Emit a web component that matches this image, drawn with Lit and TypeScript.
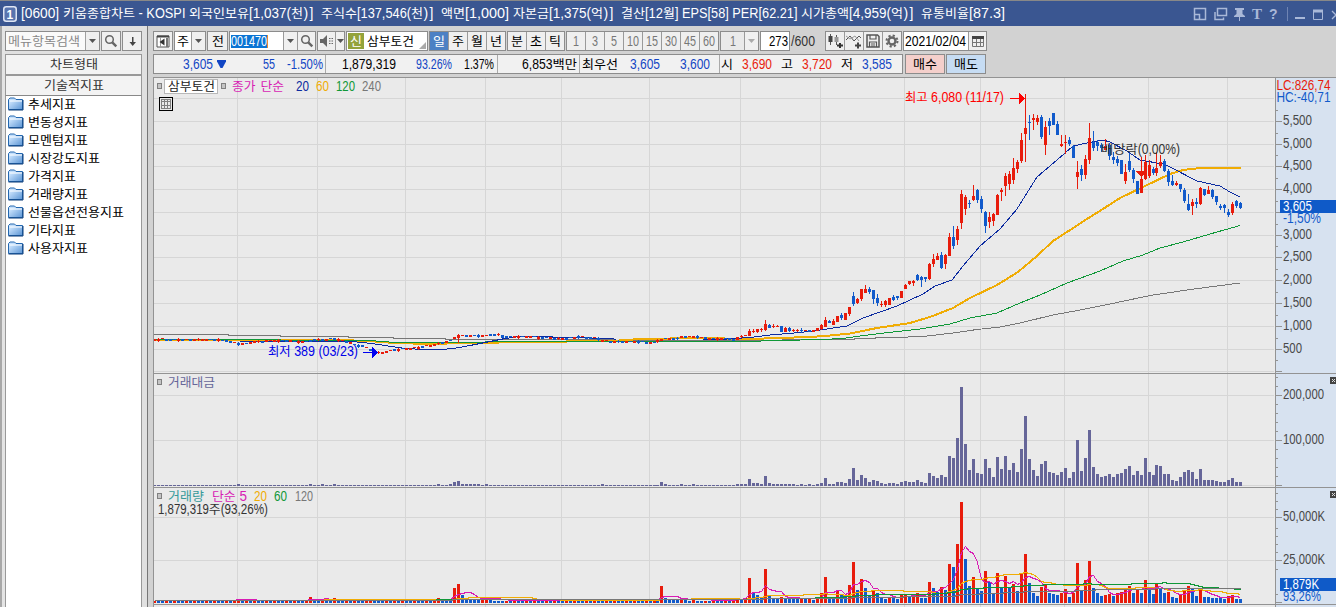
import { LitElement, html, svg, css } from "lit";
import { customElement } from "lit/decorators.js";

const RED = "#e81c0c";
const BLUE = "#115acb";

/* ---------- text set on a fixed 6/12 pixel pitch ---------- */
const isHangul = (c: string) => c >= "가" && c <= "힣";
const unit = (c: string, prop: boolean) => {
  if (isHangul(c)) return 12;
  if (!prop) return 6;
  if (c === "," || c === "." || c === ":") return 3.4;
  if (c === " ") return 5;
  if (c === "(" || c === ")") return 5;
  if (c === "%") return 9;
  if (c === "C" || c === "H" || c === "K") return 7.5;
  return 6.4;
};
const runs = (s: string) => s.match(/[가-힣]+|[^가-힣]+/g) ?? [];

function glyphs(s: string, x: number, y: number, fill: string, w = 0, prop = false) {
  const natural = [...s].reduce((a, c) => a + unit(c, prop), 0);
  const k = w ? w / natural : 1;
  let cx = x;
  return svg`<text class="g" y=${y} fill=${fill}>${runs(s).map((r) => {
    const steps = [...r].map((c) => unit(c, prop) * k);
    const rw = steps.reduce((a, b) => a + b, 0);
    const at = cx;
    cx += rw;
    if (!prop && !/[0-9A-Za-z가-힣]/.test(r)) {
      let p = at + 0.5;
      const xs = steps.map((d) => { const v = p; p += d; return v; }).join(" ");
      return svg`<tspan class="en" x=${xs}>${r}</tspan>`;
    }
    return svg`<tspan class=${isHangul(r[0]) ? "ko" : "en"} x=${at} textLength=${rw} lengthAdjust="spacingAndGlyphs">${r}</tspan>`;
  })}</text>`;
}

function label(s: string, fill = "#000", w = 0) {
  const width = w || [...s].reduce((a, c) => a + unit(c, false), 0);
  return html`<svg class="label" width=${width} height="14">${glyphs(s, 0, 12, fill, width)}</svg>`;
}

const glyphCss = css`
  .g { white-space: pre; }
  .ko { font: 12.5px "Noto Sans CJK KR", sans-serif; }
  .en { font: 14px "Liberation Sans", "Noto Sans CJK KR", sans-serif; }
  .label { display: block; flex: none; overflow: visible; }
  svg { display: block; flex: none; }
`;

/* ---------- series ---------- */
const COUNT = 273;
const barX = (i: number) => (i < 126 ? 154 + 4 * i : i < 251 ? 657 + 4 * (i - 126) : 1156 + 4 * (i - 251));

type Candle = [number, number, number, number, number];

const earlyTrack: [number, number][] = [
  [154, 340], [162, 339], [172, 340.5], [195, 340], [210, 339.5], [226, 341], [233, 343], [238, 344], [246, 343.5], [255, 342],
  [270, 341], [290, 341], [297, 342.5], [305, 342], [311, 340.5], [325, 340], [332, 339], [340, 340], [347, 342],
  [351, 343.5], [355, 345], [363, 346.5], [367, 348], [370, 350], [374, 352.5], [382, 353.3], [387, 351.5], [392, 350],
  [405, 349], [416, 348], [423, 346.5], [432, 345.3], [438, 344], [443, 343], [450, 341], [454, 338], [458, 335.5],
  [465, 335.5], [475, 336], [483, 336], [490, 335], [500, 335], [505, 337], [520, 337], [535, 337.5], [558, 339],
  [566, 338.5], [578, 337], [596, 338.5], [602, 340.5], [610, 341.5], [634, 341.5], [646, 342.5], [653, 343],
  [661, 339.5], [665, 338.5], [677, 339], [681, 337], [700, 337.5], [713, 339], [733, 339.5],
];
const earlyTone =
  "RRRBBBRBRBRRRRBBRBBBRBRBRRRBRRRRBBRBRRBBBRBRBBRRBRBBBRBBRRRRBRBRRRRBRRRRBRBRRRBRBBRRBBRBBBRRBRRBRBBRBRRBBRBRBBRBRRBRBBRBRBBBRBRRBRBBRBRRBRBRBRR";

const track = (x: number) => {
  for (let k = 1; k < earlyTrack.length; k++) {
    const [x1, y1] = earlyTrack[k];
    const [x0, y0] = earlyTrack[k - 1];
    if (x <= x1) return y0 + ((y1 - y0) * (x - x0)) / (x1 - x0);
  }
  return earlyTrack[earlyTrack.length - 1][1];
};

const early: Candle[] = Array.from({ length: 146 }, (_, i) => {
  const y = Math.round(track(barX(i)));
  const thin = i % 3 === 2;
  const tall = i === 55 || i === 76 || i === 87;
  const top = y - 1;
  const bottom = top + (tall ? 3 : thin ? 1 : 2);
  const wick = i % 5 === 1 ? 1 : 0;
  return [top - wick, top, bottom, bottom + wick + (i === 76 ? 4 : 0), earlyTone[i] === "R" ? 1 : 0];
});

/* high, body top, body bottom, low (thirds of a pixel from the origin), 1 = rising */
const rise: Candle[] = [
  [111,111,120,120,1],[105,108,111,114,1],[105,105,108,108,1],[87,93,108,108,1],[87,93,96,99,1],[87,87,96,99,1],
  [84,87,90,96,1],[60,72,90,93,1],[72,75,84,84,0],[72,78,81,84,1],[75,78,81,81,1],[78,78,96,96,0],[81,84,96,96,1],
  [81,84,93,96,0],[87,90,93,96,1],[87,90,93,96,1],[84,90,93,99,0],[90,90,93,93,1],[90,90,96,96,0],[90,90,96,96,1],
  [84,84,93,93,1],
];
const rally: Candle[] = [
  [732,735,747,750,1],[711,720,741,741,1],[720,723,729,729,0],[717,723,735,735,1],[708,708,726,726,1],[699,705,714,720,0],
  [699,699,720,720,1],[681,681,702,708,1],[636,648,672,678,0],[654,657,669,672,1],[627,627,657,663,1],[615,627,639,639,1],
  [621,627,636,642,0],[630,630,657,672,0],[642,654,669,678,0],[663,672,675,681,1],[660,663,675,681,1],[654,654,675,675,1],
  [645,651,660,663,0],[648,648,654,660,0],[633,633,654,654,1],[612,615,627,627,1],[603,603,612,615,1],[600,603,609,618,1],
  [582,585,600,603,0],[588,591,600,621,0],[591,591,597,606,0],[549,552,597,600,1],[522,537,552,561,1],[519,528,540,540,1],
  [516,525,564,567,0],[522,525,552,567,1],[459,471,528,528,1],[438,471,498,507,0],[438,447,480,495,1],[330,342,429,447,1],
  [345,351,387,405,1],[360,369,372,384,0],[315,348,360,363,1],[327,330,360,369,0],[348,357,387,399,0],[393,396,438,459,0],
  [396,411,426,444,1],[399,402,423,438,1],[342,345,405,405,1],[324,330,336,363,1],[279,288,318,348,1],[273,282,312,330,1],
  [234,264,300,312,1],[240,246,267,279,1],[159,180,243,249,1],[42,144,162,246,1],[105,126,129,180,0],[102,114,120,150,1],
  [105,114,126,135,1],[105,111,171,177,0],[123,141,195,225,1],[114,123,138,165,0],[99,99,135,135,0],[123,132,165,165,0],
  [165,192,198,201,1],[165,186,189,222,1],[171,180,192,198,0],[195,198,234,234,0],[243,276,291,327,1],[255,267,285,303,0],
  [225,237,285,297,1],[129,174,240,252,1],[153,186,204,213,0],[180,186,198,213,0],[189,195,204,216,0],[177,198,210,210,1],
];
const decline: Candle[] = [
  [219,225,258,270,0],[246,261,270,282,0],[258,267,279,288,0],[270,270,312,312,0],[282,306,333,342,1],[249,273,300,306,0],
  [294,300,327,339,0],[333,333,372,372,0],[261,327,369,369,1],[255,276,327,330,1],[270,285,318,324,1],[291,297,309,315,0],
  [246,294,309,318,1],[255,276,288,294,1],[267,273,303,306,0],[297,303,336,348,0],[315,333,345,348,0],[333,339,345,348,1],
  [342,342,357,366,0],[354,360,393,399,0],[372,402,420,423,0],[387,396,408,435,1],[384,396,402,414,0],[351,354,402,405,1],
  [357,357,375,378,0],[348,360,372,372,1],[357,360,381,387,0],[378,378,396,405,0],[402,408,414,420,0],[402,405,414,429,0],
  [417,426,435,441,0],[396,402,429,435,1],[390,393,408,414,0],[396,399,414,417,0],
];
const lift = (rows: Candle[], base: number): Candle[] =>
  rows.map(([a, b, c, d, t]) => [base + Math.round(a / 3), base + Math.round(b / 3), base + Math.round(c / 3), base + Math.round(d / 3), t]);
const candles: Candle[] = [...early, ...lift(rise, 300), ...lift(rally, 80), ...lift(decline, 70)];

const sparse = (n: number, f: (i: number) => number, set: Record<number, number>) =>
  Array.from({ length: n }, (_, i) => set[i] ?? f(i));

const amounts = [
  ...sparse(146, () => 1, { 21: 2, 39: 2, 42: 2, 45: 2, 71: 2, 74: 2, 75: 4, 76: 5, 77: 2, 78: 2, 79: 2, 80: 2, 81: 2, 83: 2, 112: 2, 127: 4, 128: 2, 132: 2, 135: 2 }),
  2,2,2,7,3,3,2,10,3,2,2,2,2,2,2,1,2,1,2,1,2,3,8,2,2,4,4,3,7,18,6,11,8,4,6,5,3,2,3,3,2,
  4,5,4,4,6,4,3,13,10,8,11,9,30,28,48,99,42,16,27,13,12,27,18,9,29,17,30,16,23,14,37,70,27,16,10,22,25,14,13,11,
  14,18,8,14,46,15,28,56,19,12,9,10,12,9,12,13,17,20,11,15,11,28,14,11,21,20,12,12,6,5,9,14,16,14,7,17,6,6,6,5,4,4,6,8,4,4,
];
const volumes = [
  ...sparse(146, (i) => ((i * 7) % 5 < 2 ? 2.4 : 2), {
    21: 4, 39: 6, 42: 4, 43: 3.8, 45: 5, 53: 4, 54: 4.2, 60: 4, 62: 4, 71: 5, 72: 4, 75: 15, 76: 19, 77: 8, 78: 4, 79: 4, 80: 4, 81: 3.9,
    82: 4, 83: 6, 84: 4, 127: 17, 128: 5, 129: 4, 130: 3, 131: 3, 132: 5, 133: 3, 135: 5,
  }),
  5,4,5,25,10,8,6,34,8,5,4,6,5,4,4,4,5,4,5,3,5,10,26,6,5,12,9,8,18,41,13,24,15,7,13,10,5,4,6,5,4,
  8,9,6,7,10,5,5,21,15,11,16,13,39,36,59,101,44,17,26,14,12,32,21,9,30,16,27,15,19,12,29,49,20,10,7,16,18,10,9,8,
  10,14,6,10,40,13,23,42,15,10,7,8,9,7,10,11,15,17,10,14,10,23,13,9,19,15,10,11,6,5,8,12,17,15,7,15,6,6,5,5,5,4,7,8,4,4,
];

const average = (n: number) =>
  volumes.map((_, i) => {
    const part = volumes.slice(Math.max(0, i - n + 1), i + 1);
    const y = 602 - part.reduce((a, b) => a + b, 0) / part.length;
    return `${barX(i) + 0.5},${Math.round(y) + 0.5}`;
  }).join(" ");

const ma240 = "154,334.5 228,334.5 229,335.5 280,335.5 281,336.5 348,336.5 349,337.5 393,337.5 394,338.5 445,338.5 446,339.5 613,339.5 614,340.5 782,340.5 783,339.5 854,339.5 855,338.5 875,338.5 876,337.5 899,337.5 927,336 953,333 977,329.5 1000,327 1020,323 1053,315 1080,310 1110,304 1150,295.5 1194,289 1240,283";
const ma120 = "154,339.5 280,339.5 281,340.5 370,340.5 395,342.5 485,342.5 486,341.5 743,341.5 780,340.5 822,339.5 843,338.5 856,336.5 880,333.5 920,329 950,324 970,318 997,313 1020,303 1040,295 1067,283 1100,271 1123,261 1143,255 1160,248 1183,242 1210,234 1240,225.5";
const ma60 = "154,340 230,340 340,340 368,341 395,343 430,344 465,343 500,342.5 566,342 567,341 612,341 640,339 700,338 750,339 778,338 810,337 830,335.5 850,333.5 877,328 910,323 930,317 953,308 970,298 997,285 1018,272 1037,256 1053,241 1067,232 1087,219 1110,204.5 1120,198 1143,187 1170,174 1183,170 1200,168 1241,168";
const ma20Head = "240,341.5 310,341.5 330,341.5 352,341.5 372,343.5 385,345.5 405,348.5 425,349.5 443,349.5 460,347.5 475,344.5 490,341.5 505,338.5 520,336.5 552,336.5 553,337.5 590,337.5 591,338.5 612,338.5 616,339.5";
const ma20 = "703,339.5 720,339.5 750,337.5 770,335 800,332.5 820,330 847,326 863,318 897,306 923,294 935,286 952,280 963,266 980,246 1000,229 1017,209 1037,177 1057,160 1073,146 1087,143 1103,140 1110,142 1127,151 1140,160 1163,164 1170,167 1197,181 1220,186 1230,192 1240,197";

const gridX = [237, 317, 405, 485, 561, 649, 740, 820, 904, 980, 1064, 1148, 1227];
const priceY = [98, 121, 144, 166, 189, 212, 235, 257, 280, 303, 326, 349, 371];
const priceNames = ["", "5,500", "5,000", "4,500", "4,000", "", "3,000", "2,500", "2,000", "1,500", "1,000", "500", ""];

/* ---------- chart ---------- */
@customElement("stock-chart")
class StockChart extends LitElement {
  static styles = [
    glyphCss,
    css`
      :host { display: block; height: 530px; overflow: hidden; }
      .crisp { shape-rendering: crispEdges; }
      polyline { fill: none; }
    `,
  ];

  private legend(x: number, y: number) {
    return svg`<rect x=${x + 0.5} y=${y + 0.5} width="4" height="5" fill="#c4c4c4" stroke="#808080"/>`;
  }
  private close(y: number) {
    return svg`<rect x="1330" y=${y} width="6" height="7" fill="#444"/><path d=${`M1332 ${y + 2}l3 3m0-3l-3 3`} stroke="#ddd"/>`;
  }
  private line(points: string, color: string, width = 1) {
    return svg`<polyline points=${points} stroke=${color} stroke-width=${width}/>`;
  }

  render() {
    const minorPrice = priceY.slice(1, -1).map((y, i) => Math.round((y + priceY[i + 2]) / 2));
    return html`<svg width="1183" height="530" viewBox="153 77 1183 530">
      <g class="crisp">
        <rect x="153" y="77" width="1183" height="530" fill="#eaeaea"/>
        ${gridX.map((x) => svg`<rect x=${x} y="78" width="1" height="529" fill="#d6d6d6"/>`)}
        ${[...priceY, 395, 440, 485, 517, 560].map((y) => svg`<rect x="154" y=${y} width="1120" height="1" fill="#d6d6d6"/>`)}
        ${amounts.map((h, i) => svg`<rect x=${barX(i) - 1} y=${486 - h} width="3" height=${h} fill="#666699"/>`)}
        ${volumes.map((v, i) => {
          const h = Math.round(v);
          return svg`<rect x=${barX(i) - 1} y=${603 - h} width="3" height=${h} fill=${i === 0 || v > volumes[i - 1] ? RED : BLUE}/>`;
        })}
        ${this.line(average(5), "#d81cb4")}
        ${this.line(average(20), "#f0ac04")}
        ${this.line(average(60), "#0f9838")}
        ${this.line(average(120), "#777")}
        ${this.line(ma240, "#777")}
        ${this.line(ma60, "#f0ac04", 2)}
        ${this.line(ma120, "#0f9838")}
        ${this.line(ma20Head, "#0c2ba0")}
        ${this.line(ma20, "#0c2ba0")}
        ${candles.slice(0, COUNT).map(([hi, top, bot, lo, up], i) => {
          const c = up ? RED : BLUE;
          const x = barX(i);
          return svg`<rect x=${x} y=${hi} width="1" height=${Math.max(1, lo - hi)} fill=${c}/><rect x=${x - 1} y=${top} width="3" height=${Math.max(1, bot - top)} fill=${c}/>`;
        })}
        <rect x="1275" y="77" width="61" height="530" fill="#d7e2f0"/>
        <rect x="153" y="77" width="1183" height="1" fill="#939393"/>
        <rect x="153" y="77" width="1" height="530" fill="#939393"/>
        <rect x="1275" y="77" width="1" height="530" fill="#939393"/>
        ${[373, 487, 604].map((y) => svg`<rect x="153" y=${y} width="1183" height="1" fill="#939393"/>`)}
        ${[...priceY.slice(1), 395, 440, 485, 517, 560, 602].map((y) => svg`<rect x="1276" y=${y} width="6" height="1" fill="#939393"/>`)}
        ${[110, 133, ...minorPrice, 377, 386, 404, 413, 422, 431, 449, 458, 467, 476, 493, 501, 509, 528, 536, 544, 552, 569, 594].map(
          (y) => svg`<rect x="1276" y=${y} width="2" height="1" fill="#939393"/>`,
        )}
        <rect x="1280" y="200" width="56" height="13" fill="#0f5ac8"/>
        <rect x="1280" y="578" width="56" height="13" fill="#0f5ac8"/>
        ${this.close(377)}${this.close(491)}
      </g>

      ${priceNames.map((n, i) => (n ? glyphs(n, 1283, priceY[i] + 4, "#484848", n.length > 3 ? 29 : 19, true) : null))}
      ${glyphs("LC:826,74", 1276.5, 90, RED, 54, true)}
      ${glyphs("HC:-40,71", 1276.5, 102, BLUE, 54, true)}
      ${glyphs("3,605", 1283, 211, "#fff", 29, true)}
      ${glyphs("-1,50%", 1283, 223, BLUE, 38, true)}
      ${glyphs("200,000", 1283, 399, "#484848", 41, true)}
      ${glyphs("100,000", 1283, 444, "#484848", 41, true)}
      ${glyphs("50,000K", 1283, 521, "#484848", 42, true)}
      ${glyphs("25,000K", 1283, 564, "#484848", 42, true)}
      ${glyphs("1,879K", 1283, 589, "#fff", 36, true)}
      ${glyphs("93,26%", 1283, 601, BLUE, 38, true)}

      ${this.legend(157, 83)}
      <rect x="164.5" y="79.5" width="53" height="14" fill="#fff" stroke="#b8b8b8"/>
      ${glyphs("삼부토건", 168, 91, "#222", 47)}
      ${this.legend(221, 83)}
      ${glyphs("종가 단순", 232, 91, "#d81cb4", 52, true)}
      ${glyphs("20", 296, 91, "#0c2ba0", 13)}
      ${glyphs("60", 316, 91, "#f0ac04", 13)}
      ${glyphs("120", 336, 91, "#0f9838", 19)}
      ${glyphs("240", 362, 91, "#777", 19)}
      <g class="crisp" fill="none">
        <rect x="159.5" y="97.5" width="13" height="13" stroke="#000" fill="#eaeaea"/>
        <path d="M161.500 99.500h9v9h-9zM161.500 101.500h9M161.500 105.500h9M164.500 99v10M167.500 99v10" stroke="#808080"/>
      </g>
      ${glyphs("최고 6,080 (11/17)", 905, 102, "#f00", 99, true)}
      <path class="crisp" d="M1010 98h9v-5l6 5.500l-6 5.500v-5h-9z" fill="#f00"/>
      ${glyphs("최저 389 (03/23)", 268, 356, "#0000e8", 90, true)}
      <path class="crisp" d="M363 352h9v-5l6 5.500l-6 5.500v-5h-9z" fill="#0000f0"/>
      ${glyphs("배당락(0,00%)", 1101, 154, "#333", 79, true)}
      <path class="crisp" d="M1136 171h11v1h-1l-4 5h-1l-4-5h-1z" fill=${RED}/>

      ${this.legend(157, 379)}
      ${glyphs("거래대금", 168, 387, "#666699", 47)}
      ${this.legend(157, 493)}
      ${glyphs("거래량", 168, 501, "#379a9a", 36)}
      ${glyphs("단순 5", 212, 501, "#d81cb4", 35, true)}
      ${glyphs("20", 254, 501, "#f0ac04", 13)}
      ${glyphs("60", 274, 501, "#0f9838", 13)}
      ${glyphs("120", 295, 501, "#777", 18)}
      ${glyphs("1,879,319주(93,26%)", 158, 514, "#333", 110, true)}
    </svg>`;
  }
}

/* ---------- icons ---------- */
const arrow = (c = "#555") => html`<svg width="7" height="4"><path d="M0 0h7L3.500 4z" fill=${c} /></svg>`;
const lens = html`<svg width="14" height="14" fill="none" stroke="#666"><circle cx="5.500" cy="5.500" r="3.800" stroke-width="1.500"/><path d="M8.300 8.300l4 4" stroke-width="2.400"/></svg>`;
const down = html`<svg width="9" height="11"><path d="M4 1h1.500v5H8L4.700 10 1.500 6H4z" fill="#444"/></svg>`;
const folder = html`<svg width="16" height="14" viewBox="0 0 16 14">
  <defs><linearGradient id="f" x1="0" y1="0" x2="1" y2="1"><stop offset=".25" stop-color="#c4dffb"/><stop offset="1" stop-color="#5a94d4"/></linearGradient></defs>
  <path d="M.5 12.500v-10l1.500-1.500h4.500l1.500 1.500h6.500v10z" fill="url(#f)" stroke="#2468b0"/>
  <path d="M1.500 4h12.500" stroke="#fff"/><path d="M.5 13h14.500v-10" fill="none" stroke="#0c3c78"/></svg>`;

/* ---------- sidebar ---------- */
@customElement("indicator-panel")
class IndicatorPanel extends LitElement {
  static styles = [
    glyphCss,
    css`
      :host { display: flex; flex-direction: column; box-sizing: border-box; width: 147px; padding: 5px 5px 0 5px;
        background: linear-gradient(90deg, #a8a8a8 2px, #e4e4e4 2px, #e4e4e4 5px, #e0e0e0 5px); }
      .search { display: flex; gap: 1px; height: 20px; margin-bottom: 3px; }
      .field, .btn { box-sizing: border-box; border: 1px solid #8c8c8c; display: flex; align-items: center; height: 20px; }
      .field { width: 95px; background: #fafafa; padding-left: 2px; }
      .drop { margin-left: auto; width: 13px; height: 18px; border-left: 1px solid #a0a0a0; background: #efefef; display: grid; place-items: center; }
      .btn { width: 20px; justify-content: center; background: #f0f0f0; }
      .head { box-sizing: border-box; width: 137px; height: 21px; border: 1px solid #999; background: #f3f3f3; display: grid; place-items: center; padding-bottom: 2px; }
      .head + .head { border-bottom-color: #888; }
      .list { flex: 1; box-sizing: border-box; width: 137px; border: 1px solid #999; border-width: 0 1px; background: #fff; padding: 0 0 0 2px; }
      .item { display: flex; align-items: center; gap: 4px; box-sizing: border-box; height: 18px; padding-bottom: 2px; }
    `,
  ];
  render() {
    const items = ["추세지표", "변동성지표", "모멘텀지표", "시장강도지표", "가격지표", "거래량지표", "선물옵션전용지표", "기타지표", "사용자지표"];
    return html`
      <div class="search">
        <div class="field">${label("메뉴항목검색", "#888")}<span class="drop">${arrow()}</span></div>
        <div class="btn">${lens}</div>
        <div class="btn">${down}</div>
      </div>
      <div class="head">${label("차트형태", "#333")}</div>
      <div class="head">${label("기술적지표", "#333")}</div>
      <div class="list">${items.map((n) => html`<div class="item">${folder}${label(n)}</div>`)}</div>
    `;
  }
}

/* ---------- window title ---------- */
@customElement("window-title")
class WindowTitle extends LitElement {
  static styles = [
    glyphCss,
    css`
      :host { display: flex; align-items: center; box-sizing: border-box; height: 26px; padding-left: 3px; background: #3a5691; border-top: 1px solid #888; }
      .text { margin-left: 4px; padding-bottom: 1px; }
      .tools { margin-left: auto; }
    `,
  ];
  render() {
    return html`
      <svg width="14" height="16"><rect x=".75" y=".75" width="12.500" height="14.500" rx="2.500" fill="#5874ae" stroke="#dfe6f4" stroke-width="1.500"/>
        <text x="3.500" y="12.500" font-family="Liberation Sans" font-weight="bold" font-size="12" fill="#fff">1</text></svg>
      <div class="text">${label("[0600] 키움종합차트 - KOSPI 외국인보유[1,037(천)] 주식수[137,546(천)] 액면[1,000] 자본금[1,375(억)] 결산[12월] EPS[58] PER[62.21] 시가총액[4,959(억)] 유통비율[87.3]", "#fff")}</div>
      <svg class="tools" width="144" height="16" viewBox="1192 5 144 16" fill="none" stroke="#a9b8d8">
        <path d="M1194.500 7.500h11v11h-11zM1194.500 13.500h5v5" stroke-width="1.500"/>
        <path d="M1217.500 7.500h9v7h-9zM1215 11v7.500h8.500v-2" stroke-width="1.500"/>
        <path d="M1235 7h9v2h-1.500v4l2.500 2v1h-11v-1l2.500-2v-4h-1.500zM1239 16h1v4h-1z" fill="#a9b8d8" stroke="none"/>
        <text x="1252" y="17.500" font-family="Liberation Serif" font-weight="bold" font-size="15" fill="#a9b8d8" stroke="none">T</text>
        <text x="1269" y="18" font-family="Liberation Sans" font-weight="bold" font-size="14" fill="#a9b8d8" stroke="none">?</text>
        <path d="M1287.500 6v14" stroke="#6f84b3"/>
        <path d="M1295 17h10" stroke-width="2"/>
        <path d="M1313.500 9.500h9v9h-9z"/><path d="M1313 10h10" stroke-width="3"/>
        <path d="M1332 10l8 8m0-8l-8 8" stroke-width="1.300"/>
      </svg>`;
  }
}

/* ---------- tool rows ---------- */
@customElement("chart-tools")
class ChartTools extends LitElement {
  static styles = [
    glyphCss,
    css`
      :host { display: flex; flex-direction: column; gap: 3px; height: 46px; padding-top: 5px; }
      .row, .group, .info { display: flex; align-items: center; }
      .row { height: 20px; }
      .group { box-sizing: border-box; height: 20px; border: 1px solid #8c8c8c; background: #efefef; margin-right: 1px; }
      .cell { box-sizing: border-box; height: 18px; display: flex; align-items: center; justify-content: center; flex: 1; }
      .cell + .cell { border-left: 1px solid #9a9a9a; }
      .white { background: #fff; }
      .off { background: #eaeaea; }
      .on { background: #4c80c4; }
      .drop { flex: none; width: 14px; background: #f0f0f0; }
      .search { width: 18px; }
      .slim { width: 9px; }
      .sel { background: #0b74d4; border-right: 1px solid #e88a30; height: 13px; }
      .sel .label { margin-top: -1px; }
      .start { justify-content: flex-start; padding-left: 1px; }
      .end { justify-content: flex-end; padding-right: 1px; }
      .tag { background: #94a33a; display: grid; place-items: center; width: 16px; height: 16px; margin-right: 3px; }
      .corner { margin: auto 1px 1px auto; }
      .info { box-sizing: border-box; width: 750px; height: 20px; border: 1px solid #8c8c8c; background: #f1f1f1; margin-right: 2px; }
      .part { box-sizing: border-box; height: 18px; display: flex; align-items: center; }
      .part + .part { border-left: 1px solid #aaa; }
      .trade { box-sizing: border-box; width: 40px; height: 20px; border: 1px solid #8c8c8c; display: grid; place-items: center; margin-right: 1px; }
      .buy { background: #f4cfcb; }
      .sell { background: #c6dcf3; }
      .w20 { width: 20px; } .w21 { width: 21px; } .w32 { width: 32px; } .w86 { width: 87px; } .w28 { width: 28px; } .w83 { width: 82px; }
      .w77 { width: 77px; } .w58 { width: 58px; } .w153 { width: 153px; } .w39 { width: 39px; } .w30 { width: 30px; } .w77b { width: 77px; margin: 0 1px 0 10px; } .w84 { width: 84px; }
      .p1 { width: 171px; padding-left: 29px; } .p2 { width: 172px; padding-left: 16px; } .p3 { width: 82px; padding-left: 24px; }
      .p4 { width: 140px; padding-left: 2px; } .p5 { padding-left: 1px; }
      .a3 { margin-left: 3px; } .a10 { margin-left: 9px; } .a12 { margin-left: 12px; } .a20 { margin-left: 20px; } .a36 { margin-left: 36px; }
    `,
  ];
  private cells(list: string[], cls: string, fill: string, active = "") {
    return html`<div class="group ${cls}">${list.map(
      (n) => html`<div class="cell ${n === active ? "on" : ""}">${label(n, n === active ? "#fff" : fill)}</div>`,
    )}</div>`;
  }
  render() {
    return html`
      <div class="row">
        <div class="group w20"><div class="cell"><svg width="14" height="13"><path d="M1 1h12v11H1z" fill="#fff" stroke="#555"/><path d="M1 1.500h12" stroke="#444" stroke-width="2"/><path d="M4.500 2v10" stroke="#999"/><path d="M8.500 3.500v7L3.500 7z" fill="#333"/><path d="M11 3v9" stroke="#777" stroke-width="2"/></svg></div></div>
        <div class="group w32"><div class="cell white">${label("주")}</div><div class="cell drop">${arrow()}</div></div>
        <div class="group w21"><div class="cell">${label("전")}</div></div>
        <div class="group w86"><div class="cell white start"><span class="sel">${label("001470", "#fff", 36)}</span></div><div class="cell drop">${arrow()}</div><div class="cell drop search">${lens}</div></div>
        <div class="group w28"><div class="cell"><svg width="14" height="12"><path d="M0 4h3l4-4v12L3 8H0z" fill="#666"/><path d="M9 3.500h1.500m1 0H13M9 6h1.500m1 0H13M9 8.500h1.500m1 0H13" stroke="#666" stroke-width="1.200"/></svg></div><div class="cell drop slim">${arrow()}</div></div>
        <div class="group w83 white"><div class="cell start"><span class="tag">${label("신", "#fff")}</span>${label("삼부토건", "#000", 47)}<svg class="corner" width="7" height="7"><path d="M7 0v7H0z" fill="#aaa"/></svg></div></div>
        ${this.cells(["일", "주", "월", "년"], "w77", "#000", "일")}
        ${this.cells(["분", "초", "틱"], "w58", "#000")}
        ${this.cells(["1", "3", "5", "10", "15", "30", "45", "60"], "w153", "#777")}
        <div class="group w39 off"><div class="cell">${label("1", "#777")}</div><div class="cell drop">${arrow("#aaa")}</div></div>
        <div class="group w30 white"><div class="cell end">${label("273", "#000", 19)}</div></div>
        ${label("/600", "#333", 24)}
        <div class="group w77b">
          <div class="cell"><svg width="16" height="15"><path d="M3.500 0v11M9.500 1v10" stroke="#555"/><path d="M1.500 2h4v6h-4z" fill="#444"/><path d="M7.500 3h4v5h-4z" fill="#999"/><path d="M10 11.500h6M13 9v5" stroke="#333" stroke-width="2"/></svg></div>
          <div class="cell"><svg width="16" height="15" fill="none"><path d="M0 6l4-4 4 5 5-5 2 2" stroke="#555"/><path d="M0 2l4 3 5-3 4 5" stroke="#999"/><path d="M9 11.500h6M12 8.500v6" stroke="#444" stroke-width="2"/></svg></div>
          <div class="cell"><svg width="14" height="14" fill="none" stroke="#555" stroke-width="1.500"><path d="M1 1h10.500L13 2.500V13H1z"/><path d="M4 1v4h6V1M3.500 13V8h7v5M5 10h4M5 12h4" stroke-width="1.200"/></svg></div>
          <div class="cell"><svg width="14" height="14" fill="none" stroke="#666"><circle cx="7" cy="7" r="3.500" stroke-width="2.400"/><circle cx="7" cy="7" r="5.500" stroke-width="2" stroke-dasharray="2.200 2.120"/></svg></div>
        </div>
        <div class="group w84"><div class="cell white start">${label("2021/02/04", "#000", 61)}</div><div class="cell drop search"><svg width="12" height="11" fill="none" stroke="#777"><path d="M.5 1.500h11v9H.5zM.5 6.500h11M4.500 3v8M8.500 3v8"/><path d="M0 1.500h12" stroke="#444" stroke-width="3"/></svg></div></div>
      </div>
      <div class="row">
        <div class="info">
          <div class="part p1">${label("3,605", "#1246c4")}<svg class="a3" width="11" height="10"><path d="M1 1h9v1.500L6.500 9h-2L1 2.500z" fill="#1246c4"/></svg><span class="a36">${label("55", "#1246c4")}</span><span class="a12">${label("-1.50%", "#1246c4")}</span></div>
          <div class="part p2">${label("1,879,319")}<span class="a20">${label("93.26%", "#1246c4")}</span><span class="a12">${label("1.37%")}</span></div>
          <div class="part p3">${label("6,853백만", "#000", 55)}</div>
          <div class="part p4">${label("최우선")}<span class="a12">${label("3,605", "#1246c4")}</span><span class="a20">${label("3,600", "#1246c4")}</span></div>
          <div class="part p5">${label("시")}<span class="a10">${label("3,690", RED)}</span><span class="a10">${label("고")}</span><span class="a10">${label("3,720", RED)}</span><span class="a10">${label("저")}</span><span class="a10">${label("3,585", "#1246c4")}</span></div>
        </div>
        <div class="trade buy">${label("매수")}</div>
        <div class="trade sell">${label("매도")}</div>
      </div>`;
  }
}

@customElement("app-root")
class AppRoot extends LitElement {
  static styles = css`
    :host { display: flex; flex-direction: column; width: 1336px; height: 607px; overflow: hidden; background: #d2d2d2; }
    .body { display: flex; flex: 1; min-height: 0; }
    .main { flex: 1; min-width: 0; border-left: 1px solid #777; padding-left: 5px; }
  `;
  render() {
    return html`
      <window-title></window-title>
      <div class="body">
        <indicator-panel></indicator-panel>
        <div class="main"><chart-tools></chart-tools><stock-chart></stock-chart></div>
      </div>`;
  }
}
